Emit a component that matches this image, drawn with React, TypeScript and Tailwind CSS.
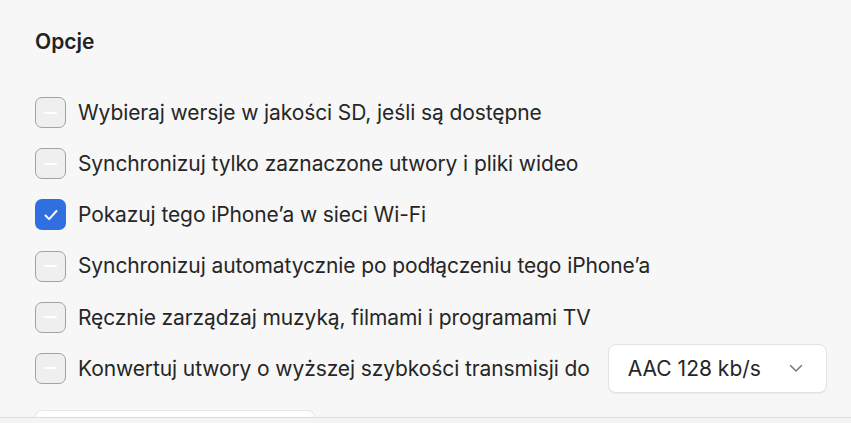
import React from "react";

type Opt = { label: string; checked?: boolean; select?: string };

const options: Opt[] = [
  { label: "Wybieraj wersje w jakości SD, jeśli są dostępne" },
  { label: "Synchronizuj tylko zaznaczone utwory i pliki wideo" },
  { label: "Pokazuj tego iPhone’a w sieci Wi-Fi", checked: true },
  { label: "Synchronizuj automatycznie po podłączeniu tego iPhone’a" },
  { label: "Ręcznie zarządzaj muzyką, filmami i programami TV" },
  { label: "Konwertuj utwory o wyższej szybkości transmisji do", select: "AAC 128 kb/s" },
];

function Box({ checked }: { checked?: boolean }) {
  if (checked) {
    return (
      <div className="flex h-[31px] w-[31px] shrink-0 items-center justify-center rounded-[7px] bg-[#2f6fe0]">
        <svg width="18" height="18" viewBox="0 0 18 18" fill="none">
          <path d="M3.5 9.5l3.6 3.6L14.5 5" stroke="white" strokeWidth="2" strokeLinecap="round" strokeLinejoin="round" />
        </svg>
      </div>
    );
  }
  return (
    <div className="flex h-[31px] w-[31px] shrink-0 items-center justify-center rounded-[7px] border-[1.5px] border-[#a2a2a2] bg-[#efefef]">
      <div className="h-[2px] w-[13px] rounded-full bg-white" />
    </div>
  );
}

export default function App() {
  return (
    <div
      className="flex h-[423px] w-[851px] flex-col overflow-hidden bg-[#f7f7f7] text-[#262626]"
      style={{ fontFamily: "Inter, 'Noto Sans', sans-serif" }}
    >
      <div className="flex flex-1 flex-col px-[35px] pt-[28px]">
        <h2 className="text-[21px] font-semibold leading-[28px] text-[#222]">Opcje</h2>
        <div className="mt-[41px] flex flex-col gap-[20.2px]">
          {options.map((o) => (
            <div key={o.label} className="flex h-[31px] items-center">
              <Box checked={o.checked} />
              <span className="ml-[12px] whitespace-nowrap text-[21px] tracking-[-0.1px]">{o.label}</span>
              {o.select && (
                <div className="ml-[18px] flex h-[49px] w-[219px] shrink-0 items-center justify-between rounded-[8px] border border-[#e2e2e2] bg-white pl-[19px] pr-[23px] shadow-[0_1px_1px_rgba(0,0,0,0.05)]">
                  <span className="text-[21px]">{o.select}</span>
                  <svg width="14" height="9" viewBox="0 0 14 9" fill="none">
                    <path d="M1.5 1.5L7 7l5.5-5.5" stroke="#7a7a7a" strokeWidth="1.5" strokeLinecap="round" strokeLinejoin="round" />
                  </svg>
                </div>
              )}
            </div>
          ))}
        </div>
        <div className="mt-auto h-[7px] w-[280px] self-start rounded-t-[8px] border border-b-0 border-[#e6e6e6] bg-white" />
      </div>
      <div className="h-[6px] border-t border-[#dcdcdc] bg-[#f4f4f4]" />
    </div>
  );
}
